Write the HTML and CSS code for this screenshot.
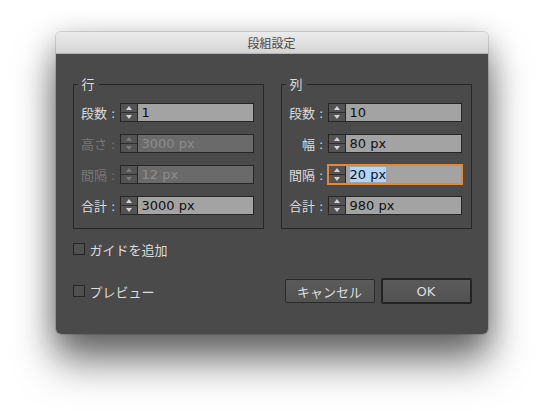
FILE: index.html
```html
<!DOCTYPE html>
<html lang="ja">
<head>
<meta charset="utf-8">
<title>段組設定</title>
<link rel="stylesheet" href="styles.css">
</head>
<body>
<div class="window">
  <div class="titlebar">段組設定</div>
  <div class="content">
    <div class="groups">
      <fieldset class="group">
        <legend>行</legend>
        <div class="rows">
          <div class="row">
            <span class="label">段数 :</span>
            <div class="field"><span class="spin"><i class="up"></i><i class="down"></i></span><span class="value">1</span></div>
          </div>
          <div class="row disabled">
            <span class="label">高さ :</span>
            <div class="field"><span class="spin"><i class="up"></i><i class="down"></i></span><span class="value">3000 px</span></div>
          </div>
          <div class="row disabled">
            <span class="label">間隔 :</span>
            <div class="field"><span class="spin"><i class="up"></i><i class="down"></i></span><span class="value">12 px</span></div>
          </div>
          <div class="row">
            <span class="label">合計 :</span>
            <div class="field"><span class="spin"><i class="up"></i><i class="down"></i></span><span class="value">3000 px</span></div>
          </div>
        </div>
      </fieldset>
      <fieldset class="group">
        <legend>列</legend>
        <div class="rows">
          <div class="row">
            <span class="label">段数 :</span>
            <div class="field"><span class="spin"><i class="up"></i><i class="down"></i></span><span class="value">10</span></div>
          </div>
          <div class="row">
            <span class="label">幅 :</span>
            <div class="field"><span class="spin"><i class="up"></i><i class="down"></i></span><span class="value">80 px</span></div>
          </div>
          <div class="row">
            <span class="label">間隔 :</span>
            <div class="field focused"><span class="spin"><i class="up"></i><i class="down"></i></span><span class="value"><span class="sel">20 px</span></span></div>
          </div>
          <div class="row">
            <span class="label">合計 :</span>
            <div class="field"><span class="spin"><i class="up"></i><i class="down"></i></span><span class="value">980 px</span></div>
          </div>
        </div>
      </fieldset>
    </div>
    <label class="check guide"><span class="box"></span>ガイドを追加</label>
    <div class="footer">
      <label class="check"><span class="box"></span>プレビュー</label>
      <div class="buttons">
        <button class="btn">キャンセル</button>
        <button class="btn default">OK</button>
      </div>
    </div>
  </div>
</div>
</body>
</html>
```
FILE: styles.css
```css
html, body {
  margin: 0;
  padding: 0;
  background: #ffffff;
}
body {
  font-family: "DejaVu Sans", "Noto Sans CJK JP", sans-serif;
  font-size: 12px;
  min-height: 414px;
  padding-top: 32px;
  box-sizing: border-box;
}
.window {
  width: 432px;
  margin: 0 auto;
  border-radius: 5px;
  box-shadow: 0 28px 40px rgba(0, 0, 0, 0.5), 0 8px 30px rgba(0, 0, 0, 0.3), 0 0 0 1px rgba(0, 0, 0, 0.12);
}
.titlebar {
  height: 22px;
  line-height: 22px;
  text-align: center;
  font-family: "Noto Sans CJK JP", sans-serif;
  font-size: 12px;
  color: #4a4a4a;
  background: linear-gradient(#ececec, #d4d4d4);
  border-radius: 5px 5px 0 0;
  border-bottom: 1px solid #b4b4b4;
  box-sizing: border-box;
}
.content {
  background: #4a4a4a;
  border-radius: 0 0 5px 5px;
  padding: 22px 16px 31px 17px;
}
.groups {
  display: flex;
  gap: 17px;
}
.group {
  width: 191px;
  box-sizing: border-box;
  margin: 0;
  padding: 11px 0 13px 0;
  min-width: 0;
  border: 1px solid #262626;
}
.group legend {
  margin-left: 4px;
  padding: 0 4px;
  font-family: "Noto Sans CJK JP", sans-serif;
  font-size: 13px;
  line-height: 16px;
  color: #dcdcdc;
}
.rows {
  display: flex;
  flex-direction: column;
  gap: 12px;
}
.row {
  display: flex;
  align-items: center;
  height: 19px;
}
.label {
  width: 46px;
  box-sizing: border-box;
  padding-right: 4px;
  text-align: right;
  color: #dadada;
  font-size: 13px;
  white-space: nowrap;
}
.field {
  display: flex;
  width: 134px;
  height: 19px;
  box-sizing: border-box;
  border: 1px solid #262626;
}
.spin {
  width: 16px;
  flex: none;
  display: flex;
  flex-direction: column;
  background: #535353;
  border-right: 1px solid #262626;
}
.spin i {
  flex: 1;
  display: flex;
  align-items: center;
  justify-content: center;
}
.spin i.up {
  border-bottom: 1px solid #2f2f2f;
}
.spin i::before {
  content: "";
  width: 0;
  height: 0;
  border-left: 3.5px solid transparent;
  border-right: 3.5px solid transparent;
}
.spin i.up::before {
  border-bottom: 4px solid #d4d4d4;
}
.spin i.down::before {
  border-top: 4px solid #d4d4d4;
}
.value {
  flex: 1;
  background: #a3a3a3;
  color: #111;
  font-size: 13px;
  line-height: 17px;
  padding-left: 4px;
  white-space: nowrap;
  overflow: hidden;
}
.sel {
  background: #b3d4fc;
}
.field.focused {
  border-color: #e8872d;
  box-shadow: 0 0 0 1px #e8872d;
}
.row.disabled .label {
  color: #777;
}
.row.disabled .value {
  background: #6a6a6a;
  color: #8c8c8c;
}
.row.disabled .spin i.up::before {
  border-bottom-color: #7a7a7a;
}
.row.disabled .spin i.down::before {
  border-top-color: #7a7a7a;
}
.check {
  display: flex;
  align-items: center;
  gap: 5px;
  height: 16px;
  color: #dcdcdc;
  font-family: "Noto Sans CJK JP", sans-serif;
  font-size: 13px;
}
.check .box {
  width: 12px;
  height: 12px;
  box-sizing: border-box;
  border: 1px solid #252525;
  background: #505050;
}
.guide {
  margin-top: 12px;
}
.footer {
  margin-top: 22px;
  display: flex;
  align-items: center;
  justify-content: space-between;
  height: 24px;
}
.buttons {
  display: flex;
  gap: 6px;
  align-items: center;
}
.btn {
  height: 24px;
  box-sizing: border-box;
  padding: 0;
  margin: 0;
  font-family: "Noto Sans CJK JP", sans-serif;
  font-size: 13px;
  color: #dedede;
  background: linear-gradient(#5a5a5a, #525252);
  border: 1px solid #2a2a2a;
  border-radius: 2px;
  width: 90px;
}
.btn.default {
  width: 91px;
  height: 26px;
  border: 2px solid #232323;
  font-family: "DejaVu Sans", sans-serif;
}
```
